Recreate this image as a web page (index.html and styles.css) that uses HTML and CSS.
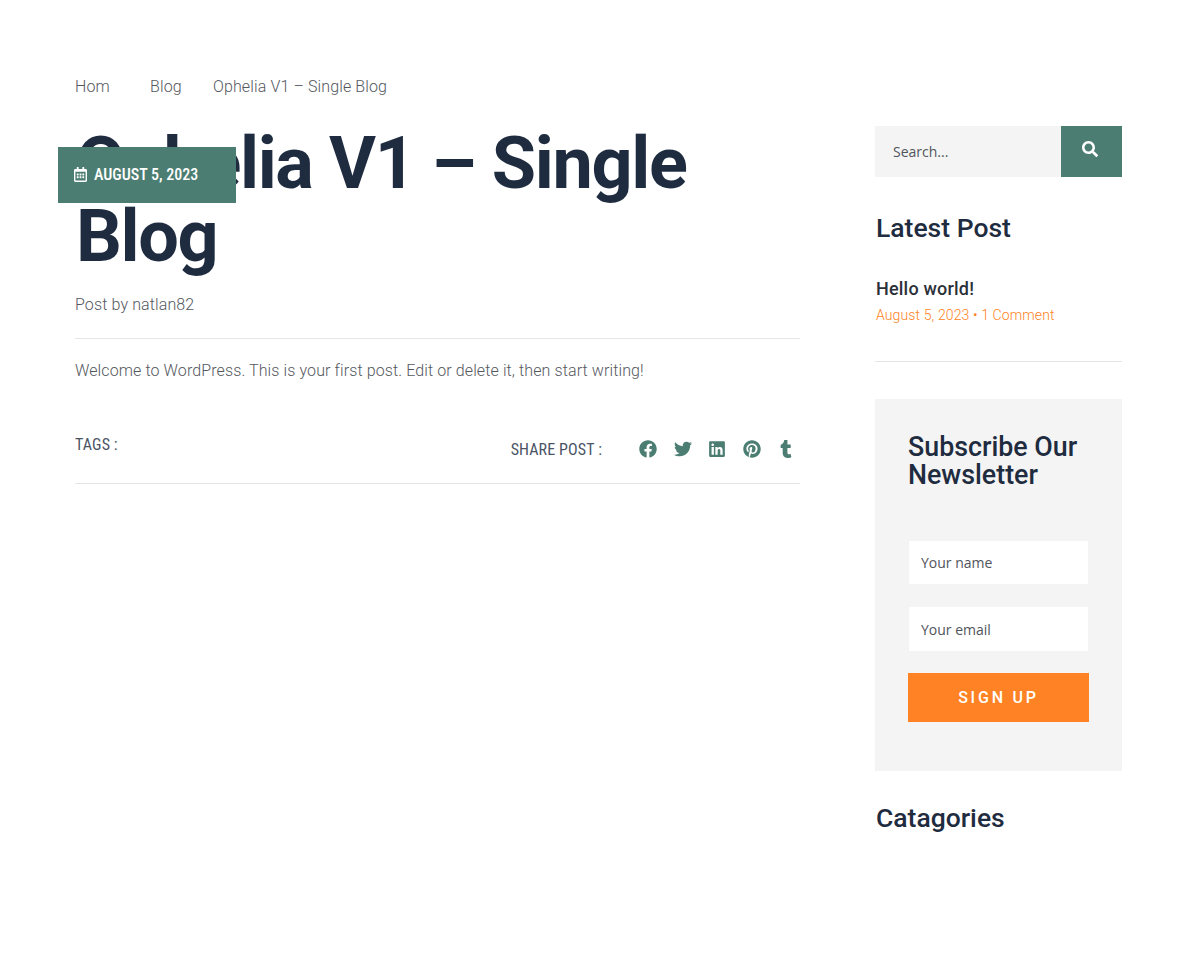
FILE: index.html
```html
<!DOCTYPE html>
<html lang="en">

<head>
    <meta charset="UTF-8">
    <title>Ophelia V1 – Single Blog</title>
    <link rel="stylesheet" href="styles.css">
</head>

<body>
    <div class="page">

        <!-- Left column: the post -->
        <main class="post">
            <nav class="breadcrumb">
                <a class="crumb-home">Hom</a>
                <a class="crumb-blog">Blog</a>
                <span>Ophelia V1 – Single Blog</span>
            </nav>

            <div class="post-head">
                <h1 class="post-title">Ophelia V1 – Single Blog</h1>
                <div class="date-badge">
                    <svg class="date-icon" viewBox="0 0 448 512"><path d="M148 288h-40c-6.6 0-12-5.4-12-12v-40c0-6.6 5.4-12 12-12h40c6.6 0 12 5.4 12 12v40c0 6.6-5.4 12-12 12zm108-12v-40c0-6.6-5.4-12-12-12h-40c-6.6 0-12 5.4-12 12v40c0 6.6 5.4 12 12 12h40c6.6 0 12-5.4 12-12zm96 0v-40c0-6.6-5.4-12-12-12h-40c-6.6 0-12 5.4-12 12v40c0 6.6 5.4 12 12 12h40c6.6 0 12-5.4 12-12zm-96 96v-40c0-6.6-5.4-12-12-12h-40c-6.6 0-12 5.4-12 12v40c0 6.6 5.4 12 12 12h40c6.6 0 12-5.4 12-12zm-96 0v-40c0-6.6-5.4-12-12-12h-40c-6.6 0-12 5.4-12 12v40c0 6.6 5.4 12 12 12h40c6.6 0 12-5.4 12-12zm192 0v-40c0-6.6-5.4-12-12-12h-40c-6.6 0-12 5.4-12 12v40c0 6.6 5.4 12 12 12h40c6.6 0 12-5.4 12-12zm96-260v352c0 26.5-21.5 48-48 48H48c-26.5 0-48-21.5-48-48V112c0-26.5 21.5-48 48-48h48V12c0-6.6 5.4-12 12-12h40c6.6 0 12 5.4 12 12v52h128V12c0-6.6 5.4-12 12-12h40c6.6 0 12 5.4 12 12v52h48c26.5 0 48 21.5 48 48zm-48 346V160H48v298c0 3.3 2.7 6 6 6h340c3.3 0 6-2.7 6-6z"/></svg>
                    <span class="date-text">AUGUST 5, 2023</span>
                </div>
            </div>

            <p class="post-by">Post by natlan82</p>
            <p class="post-body">Welcome to WordPress. This is your first post. Edit or delete it, then start writing!</p>

            <div class="post-foot">
                <span class="foot-label">TAGS :</span>
                <div class="share">
                    <span class="foot-label share-label">SHARE POST :</span>
                    <svg class="share-icon" viewBox="0 0 512 512"><path d="M504 256C504 119 393 8 256 8S8 119 8 256c0 123.78 90.69 226.38 209.25 245V327.69h-63V256h63v-54.64c0-62.15 37-96.48 93.67-96.48 27.14 0 55.52 4.84 55.52 4.84v61h-31.28c-30.8 0-40.41 19.12-40.41 38.73V256h68.78l-11 71.69h-57.78V501C413.31 482.38 504 379.78 504 256z"/></svg>
                    <svg class="share-icon" viewBox="0 0 512 512"><path d="M459.37 151.716c.325 4.548.325 9.097.325 13.645 0 138.72-105.583 298.558-298.558 298.558-59.452 0-114.68-17.219-161.137-47.106 8.447.974 16.568 1.299 25.34 1.299 49.055 0 94.213-16.568 130.274-44.832-46.132-.975-84.792-31.188-98.112-72.772 6.498.974 12.995 1.624 19.818 1.624 9.421 0 18.843-1.3 27.614-3.573-48.081-9.747-84.143-51.98-84.143-102.985v-1.299c13.969 7.797 30.214 12.67 47.431 13.319-28.264-18.843-46.781-51.005-46.781-87.391 0-19.492 5.197-37.36 14.294-52.954 51.655 63.675 129.3 105.258 216.365 109.807-1.624-7.797-2.599-15.918-2.599-24.04 0-57.828 46.782-104.934 104.934-104.934 30.213 0 57.502 12.67 76.67 33.137 23.715-4.548 46.456-13.32 66.599-25.34-7.798 24.366-24.366 44.833-46.132 57.827 21.117-2.273 41.584-8.122 60.426-16.243-14.292 20.791-32.161 39.308-52.628 54.253z"/></svg>
                    <svg class="share-icon" viewBox="0 0 448 512"><path d="M416 32H31.9C14.3 32 0 46.5 0 64.3v383.4C0 465.5 14.3 480 31.9 480H416c17.6 0 32-14.5 32-32.3V64.3c0-17.8-14.4-32.3-32-32.3zM135.4 416H69V202.2h66.5V416zm-33.2-243c-21.3 0-38.5-17.3-38.5-38.5S80.9 96 102.2 96c21.2 0 38.5 17.3 38.5 38.5 0 21.3-17.2 38.5-38.5 38.5zm282.1 243h-66.4V312c0-24.8-.5-56.7-34.5-56.7-34.6 0-39.9 27-39.9 54.9V416h-66.4V202.2h63.7v29.2h.9c8.9-16.8 30.6-34.5 62.9-34.5 67.2 0 79.7 44.3 79.7 101.9V416z"/></svg>
                    <svg class="share-icon" viewBox="0 0 496 512"><path d="M496 256c0 137-111 248-248 248-25.6 0-50.2-3.9-73.4-11.1 10.1-16.5 25.2-43.5 30.8-65 3-11.6 15.4-59 15.4-59 8.1 15.4 31.7 28.5 56.8 28.5 74.8 0 128.7-68.8 128.7-154.3 0-81.9-66.9-143.2-152.9-143.2-107 0-163.9 71.8-163.9 150.1 0 36.4 19.4 81.7 50.3 96.1 4.7 2.2 7.2 1.2 8.3-3.3.8-3.4 5-20.3 6.9-28.1.6-2.5.3-4.7-1.7-7.1-10.1-12.5-18.3-35.3-18.3-56.6 0-54.7 41.4-107.6 112-107.6 60.9 0 103.6 41.5 103.6 100.9 0 67.1-33.9 113.6-78 113.6-24.3 0-42.6-20.1-36.7-44.8 7-29.5 20.5-61.3 20.5-82.6 0-19-10.2-34.9-31.4-34.9-24.9 0-44.9 25.7-44.9 60.2 0 22 7.4 36.8 7.4 36.8s-24.5 103.8-29 123.2c-5 21.4-3 51.6-.9 71.2C65.4 450.9 0 361.1 0 256 0 119 111 8 248 8s248 111 248 248z"/></svg>
                    <svg class="share-icon" viewBox="0 0 320 512"><path d="M309.8 480.3c-13.6 14.5-50 31.7-97.4 31.7-120.8 0-147-88.8-147-140.6v-144H17.9c-5.5 0-10-4.5-10-10v-68c0-7.2 4.5-13.6 11.3-16 62-21.8 81.5-76 84.3-117.1.8-11 6.5-16.3 16.1-16.3h70.9c5.5 0 10 4.5 10 10v115.2h83c5.5 0 10 4.4 10 9.9v81.7c0 5.5-4.5 10-10 10h-83.4V360c0 34.2 23.7 53.6 68 35.8 4.8-1.9 9-3.2 12.7-2.2 3.5.9 5.8 3.4 7.4 7.9l22 64.3c1.8 5 3.3 10.6-.4 14.5z"/></svg>
                </div>
            </div>
        </main>

        <!-- Right column: sidebar -->
        <aside class="sidebar">
            <form class="search">
                <input class="search-input" type="text" placeholder="Search...">
                <button class="search-button" type="button">
                    <svg class="search-icon" viewBox="0 0 512 512"><path d="M505 442.7L405.3 343c-4.5-4.5-10.6-7-17-7H372c27.6-35.3 44-79.7 44-128C416 93.1 322.9 0 208 0S0 93.1 0 208s93.1 208 208 208c48.3 0 92.7-16.4 128-44v16.3c0 6.4 2.5 12.5 7 17l99.7 99.7c9.4 9.4 24.6 9.4 33.9 0l28.3-28.3c9.4-9.4 9.4-24.6.1-34zM208 336c-70.7 0-128-57.2-128-128 0-70.7 57.2-128 128-128 70.7 0 128 57.2 128 128 0 70.7-57.2 128-128 128z"/></svg>
                </button>
            </form>

            <h2 class="side-title latest-title">Latest Post</h2>
            <div class="latest-item">
                <h3 class="latest-name">Hello world!</h3>
                <p class="latest-meta">August 5, 2023 • 1 Comment</p>
            </div>

            <form class="newsletter">
                <h2 class="newsletter-title">Subscribe Our Newsletter</h2>
                <input class="newsletter-input name-input" type="text" placeholder="Your name">
                <input class="newsletter-input email-input" type="text" placeholder="Your email">
                <button class="signup" type="button">SIGN UP</button>
            </form>

            <h2 class="side-title categories-title">Catagories</h2>
        </aside>

    </div>
</body>

</html>
```

FILE: styles.css
```css
body {
    margin: 0;
    background-color: #FFFFFF;
    font-family: Roboto, "Liberation Sans", sans-serif;
    color: #5F6368;
}

h1, h2, h3, p {
    margin: 0;
}

.page {
    display: grid;
    grid-template-columns: 725px 247px;
    column-gap: 75px;
    padding: 76px 78px 0 75px;
    min-height: 903px;
}

.breadcrumb {
    display: flex;
    font-size: 16px;
    font-weight: 300;
    line-height: 22px;
    letter-spacing: 0.12px;
    color: #54585E;
}

.crumb-home {
    width: 75px;
}

.crumb-blog {
    width: 63px;
}

.post-head {
    position: relative;
    margin-top: 29px;
}

.post-title {
    padding-left: 1px;
    font-size: 72px;
    font-weight: 700;
    line-height: 73px;
    letter-spacing: -1.35px;
    color: #1F2C40;
}

.date-badge {
    position: absolute;
    top: 20px;
    left: -17px;
    width: 178px;
    height: 56px;
    display: flex;
    align-items: center;
    padding: 0 0 1px 16px;
    box-sizing: border-box;
    background-color: #4C7D72;
    color: #FFFFFF;
}

.date-icon {
    width: 13px;
    height: 15px;
    fill: #FFFFFF;
    margin-right: 7px;
}

.date-text {
    font-family: "Roboto Condensed", "Liberation Sans Narrow", Roboto, sans-serif;
    font-size: 16px;
    font-weight: 500;
}

.post-by {
    margin-top: 21px;
    padding-bottom: 22px;
    border-bottom: 1px solid #E3E5E7;
    font-size: 16px;
    font-weight: 300;
    line-height: 22px;
    letter-spacing: 0.12px;
    color: #54585E;
}

.post-body {
    margin-top: 21px;
    font-size: 16px;
    font-weight: 300;
    line-height: 22px;
    letter-spacing: 0.11px;
    color: #54585E;
}

.post-foot {
    display: flex;
    justify-content: space-between;
    margin-top: 53px;
    padding-bottom: 23px;
    border-bottom: 1px solid #E3E5E7;
}

.foot-label {
    font-family: "Roboto Condensed", "Liberation Sans Narrow", Roboto, sans-serif;
    font-size: 16px;
    font-weight: 400;
    line-height: 20px;
    letter-spacing: 0.12px;
    color: #4A5464;
}

.share {
    display: flex;
    align-items: center;
    margin-top: 5px;
}

.share-label {
    margin-right: 37px;
}

.share-icon {
    width: 18px;
    height: 18px;
    fill: #4C7D72;
    margin: 0 16.5px 2px 0;
}

.share-icon:last-child {
    margin-right: 5px;
}

.search {
    display: flex;
    height: 51px;
    margin-top: 50px;
}

.search-input {
    flex: 1;
    min-width: 0;
    border: none;
    padding: 0 18px;
    background-color: #F4F4F4;
    font-family: "Open Sans", sans-serif;
    font-size: 14px;
}

.search-input::placeholder,
.newsletter-input::placeholder {
    color: #50545B;
    opacity: 1;
}

.search-button {
    width: 61px;
    border: none;
    padding: 0 3px 2px 0;
    background-color: #4C7D72;
}

.search-icon {
    width: 16px;
    height: 16px;
    fill: #FFFFFF;
}

.side-title {
    padding-left: 1px;
    font-size: 26.5px;
    font-weight: 500;
    line-height: 32px;
    color: #1F2C40;
}

.latest-title {
    margin-top: 35px;
}

.latest-item {
    margin-top: 32px;
    padding: 0 0 33px 1px;
    border-bottom: 1px solid #E3E5E7;
}

.latest-name {
    font-size: 18px;
    font-weight: 500;
    line-height: 26px;
    letter-spacing: 0.2px;
    color: #2B3038;
}

.latest-meta {
    font-size: 14px;
    font-weight: 300;
    line-height: 26px;
    letter-spacing: 0.12px;
    color: #FF8324;
}

.newsletter {
    display: flex;
    flex-direction: column;
    height: 372px;
    box-sizing: border-box;
    margin-top: 37px;
    padding: 34px 33px 33px;
    background-color: #F4F4F4;
}

.newsletter-title {
    font-size: 26.8px;
    font-weight: 500;
    line-height: 28px;
    color: #1F2C40;
}

.newsletter-input {
    height: 43px;
    margin: 0 1px;
    border: none;
    padding: 0 12px;
    box-sizing: border-box;
    background-color: #FFFFFF;
    font-family: "Open Sans", sans-serif;
    font-size: 14px;
}

.name-input {
    margin-top: 52px;
}

.email-input {
    height: 44px;
    margin-top: 23px;
}

.signup {
    height: 49px;
    margin-top: 22px;
    border: none;
    background-color: #FF8324;
    color: #FFFFFF;
    font-family: Roboto, sans-serif;
    font-size: 16px;
    font-weight: 500;
    letter-spacing: 2.8px;
}

.categories-title {
    margin-top: 31px;
}
```
